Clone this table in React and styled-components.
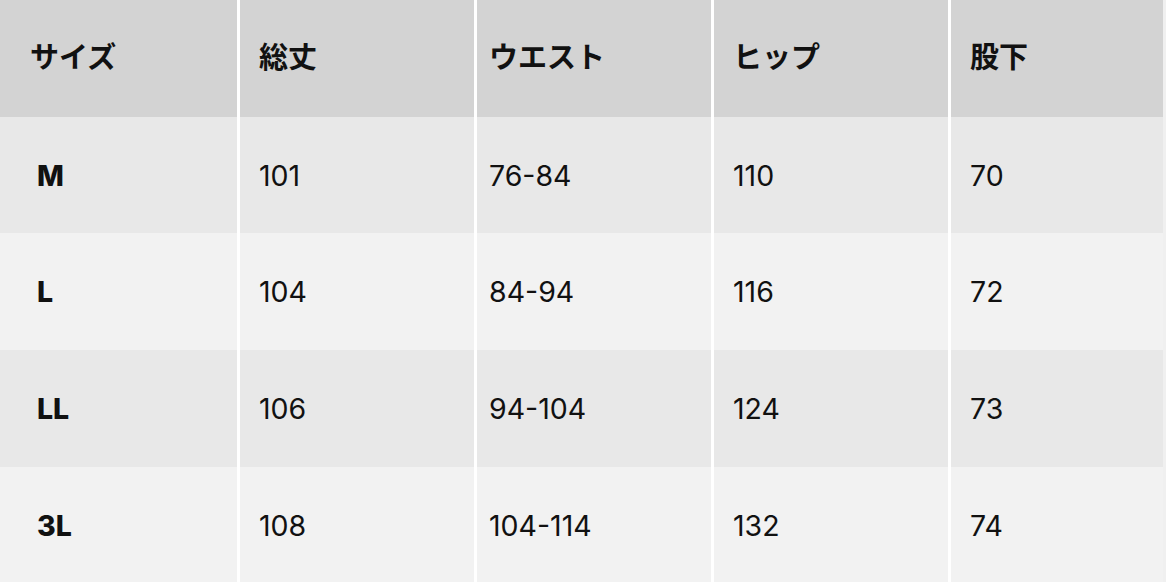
import React from 'react';
import styled, { createGlobalStyle } from 'styled-components';

const columns = ['サイズ', '総丈', 'ウエスト', 'ヒップ', '股下'];

// left inset of the text in each column
const insets = [30, 19, 12, 19, 19];
const bodyInsets = [37, 19, 12, 19, 19];

const rows = [
  ['M', '101', '76-84', '110', '70'],
  ['L', '104', '84-94', '116', '72'],
  ['LL', '106', '94-104', '124', '73'],
  ['3L', '108', '104-114', '132', '74'],
];

const App = () => {
  return (
    <>
      <GlobalStyle />
      <Table>
        <Row $bg="#d3d3d3" $height={117}>
          {columns.map((label, i) => (
            <HeadCell key={label} $inset={insets[i]}>
              {label}
            </HeadCell>
          ))}
        </Row>
        {rows.map((row, r) => (
          <Row key={row[0]} $bg={r % 2 === 0 ? '#e8e8e8' : '#f2f2f2'} $height={r === 0 ? 116 : 117}>
            {row.map((value, i) => (
              <Cell key={i} $first={i === 0} $inset={bodyInsets[i]}>
                {value}
              </Cell>
            ))}
          </Row>
        ))}
      </Table>
    </>
  );
};

const GlobalStyle = createGlobalStyle`
  html, body {
    margin: 0;
    padding: 0;
    background: #f0f0f0;
  }
  body {
    font-family: Inter, "Noto Sans CJK JP", sans-serif;
    color: #111;
  }
`;

const Table = styled.div`
  width: 1163px;
  display: flex;
  flex-direction: column;
`;

const Row = styled.div`
  display: grid;
  grid-template-columns: 237px 234px 234px 234px 212px;
  column-gap: 3px;
  height: ${(p) => p.$height}px;
  background: #ffffff;

  > div {
    background: ${(p) => p.$bg};
  }
`;

const HeadCell = styled.div`
  display: flex;
  align-items: center;
  padding-left: ${(p) => p.$inset}px;
  padding-bottom: 8px;
  font-family: "Noto Sans CJK JP", sans-serif;
  font-weight: 700;
  font-size: 29px;
  color: #111;
`;

const Cell = styled.div`
  display: flex;
  align-items: center;
  padding-left: ${(p) => p.$inset}px;
  font-family: Inter, "Noto Sans CJK JP", sans-serif;
  font-weight: ${(p) => (p.$first ? 800 : 400)};
  font-size: 28.5px;
  color: #111;
`;

export default App;
